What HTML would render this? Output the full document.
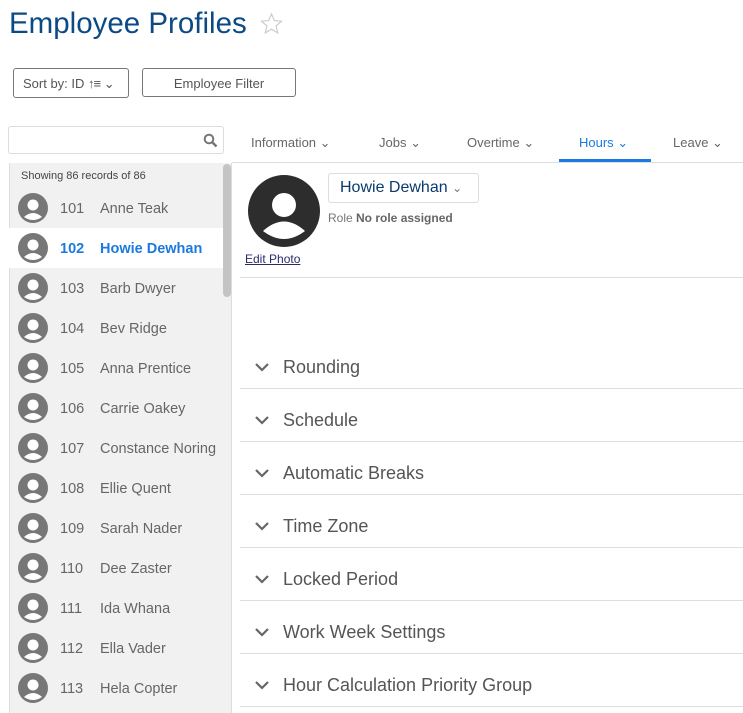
<!DOCTYPE html>
<html><head><style>
*{box-sizing:border-box;margin:0;padding:0}
body{width:743px;height:713px;overflow:hidden;background:#fff;font-family:"Liberation Sans",sans-serif;position:relative;color:#555}
.a{position:absolute}
.row{position:absolute;left:9px;width:214px;height:40px;font-size:14.5px;color:#666}
.row .av{position:absolute;left:9px;top:5px;width:30px;height:30px}
.row .id{position:absolute;left:51px;top:13px}
.row .nm{position:absolute;left:91px;top:13px}
.acc{position:absolute;left:240px;width:503px;height:53px;border-bottom:1px solid #ddd;font-size:18px;color:#555}
.acc svg{position:absolute;left:14px;top:23px}
.acc span{position:absolute;left:43px;top:21px}
.tab{position:absolute;top:135px;font-size:13px;color:#666}
</style></head><body>
<div class="a" style="left:9px;top:7px;font-size:29.5px;color:#0c4a86">Employee Profiles</div>
<svg class="a" style="left:259px;top:12px" width="25" height="24" viewBox="0 0 24 24"><path d="M12 2l2.9 6.6 7.1.6-5.4 4.7 1.6 7L12 17.2 5.8 20.9l1.6-7L2 9.2l7.1-.6z" fill="none" stroke="#ccc" stroke-width="1.2"/></svg>
<div class="a" style="left:13px;top:68px;width:116px;height:30px;border:1px solid #777;border-radius:3px;font-size:13px;color:#555;padding:7px 0 0 9px">Sort by: ID <b style="font-weight:bold;letter-spacing:-1px">↑≡</b> ⌄</div>
<div class="a" style="left:142px;top:68px;width:154px;height:29px;border:1px solid #777;border-radius:3px;font-size:13px;color:#555;text-align:center;padding-top:7px">Employee Filter</div>
<div class="a" style="left:8px;top:126px;width:216px;height:28px;border:1px solid #ddd;border-radius:3px"></div>
<svg class="a" style="left:203px;top:133px" width="15" height="15" viewBox="0 0 15 15"><circle cx="6" cy="6" r="4.3" fill="none" stroke="#777" stroke-width="2"/><path d="M9 9l4.5 4.5" stroke="#777" stroke-width="2.5"/></svg>
<div class="tab" style="left:251px">Information ⌄</div>
<div class="tab" style="left:379px">Jobs ⌄</div>
<div class="tab" style="left:467px">Overtime ⌄</div>
<div class="tab" style="left:579px;color:#1a7ae0">Hours ⌄</div>
<div class="tab" style="left:673px">Leave ⌄</div>
<div class="a" style="left:559px;top:159px;width:92px;height:3px;background:#1a7ae0"></div>
<div class="a" style="left:232px;top:162px;width:511px;height:1px;background:#ddd"></div>
<div class="a" style="left:9px;top:163px;width:223px;height:550px;background:#f1f1f1;border-left:1px solid #ddd;border-right:1px solid #ddd"></div>
<div class="a" style="left:223px;top:164px;width:8px;height:133px;background:#c4c4c4;border-radius:4px"></div>
<div class="a" style="left:21px;top:170px;font-size:11px;color:#444">Showing 86 records of 86</div>
<div id="list"></div>
<svg class="a" style="left:248px;top:175px" width="72" height="72" viewBox="0 0 72 72"><circle cx="36" cy="36" r="36" fill="#2d2d2d"/><circle cx="36" cy="30" r="12" fill="#fff"/><path d="M15 56 Q36 37 57 56 Q36 72 15 56z" fill="#fff"/></svg>
<div class="a" style="left:245px;top:252px;font-size:12px;color:#2a2a6a;text-decoration:underline">Edit Photo</div>
<div class="a" style="left:328px;top:173px;width:151px;height:30px;border:1px solid #ddd;border-radius:3px;font-size:16px;color:#0c3a6e;padding:5px 0 0 11px">Howie Dewhan <span style="font-size:12px;color:#777">⌄</span></div>
<div class="a" style="left:328px;top:211px;font-size:12px;color:#777">Role <b style="color:#666">No role assigned</b></div>
<div class="a" style="left:240px;top:277px;width:503px;height:1px;background:#ddd"></div>
<div id="accs"></div>
<script>
var n=["Anne Teak","Howie Dewhan","Barb Dwyer","Bev Ridge","Anna Prentice","Carrie Oakey","Constance Noring","Ellie Quent","Sarah Nader","Dee Zaster","Ida Whana","Ella Vader","Hela Copter"],h="";
n.forEach(function(x,i){var s=i==1;h+='<div class="row" style="top:'+(188+i*40)+'px;'+(s?'background:#fff;color:#1a7ae0;font-weight:bold':'')+'"><svg class="av" viewBox="0 0 30 30"><circle cx="15" cy="15" r="15" fill="#777"/><circle cx="15" cy="12" r="5.5" fill="#fff"/><path d="M6 24 Q15 16 24 24 Q15 30 6 24z" fill="#fff"/></svg><span class="id">'+(101+i)+'</span><span class="nm">'+x+'</span></div>'});
document.getElementById("list").innerHTML=h;
var a=["Rounding","Schedule","Automatic Breaks","Time Zone","Locked Period","Work Week Settings","Hour Calculation Priority Group"];h="";
a.forEach(function(x,i){h+='<div class="acc" style="top:'+(336+i*53)+'px"><svg width="16" height="16" viewBox="0 0 16 16"><path d="M2 5l6 6 6-6" fill="none" stroke="#666" stroke-width="2.2"/></svg><span>'+x+'</span></div>'});
document.getElementById("accs").innerHTML=h;
</script>
</body></html>
